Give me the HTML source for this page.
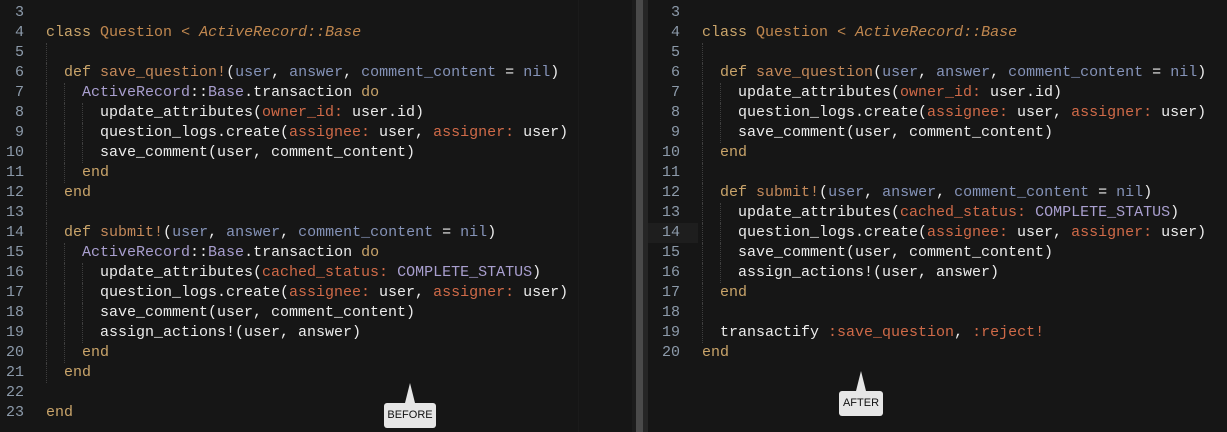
<!DOCTYPE html><html><head><style>
body{margin:0;width:1227px;height:432px;background:#161616;overflow:hidden;position:relative;font-family:"Liberation Mono",monospace;font-size:15px}
.pn{position:absolute;top:3px;line-height:20px;white-space:pre;color:#ececec}
.ln{position:absolute;top:3px;line-height:20px;color:#8c9aaa;text-align:right;white-space:pre}
.g{display:inline-block;width:18px;height:20px;vertical-align:top;box-sizing:border-box;border-left:1px dotted #3e3e3e}
.k{color:#c9a46a}.c{color:#c0874f}.i{font-style:italic;color:#c0874f}.m{color:#c4895a}.p{color:#8593b8}.s{color:#cf6a48}.a{color:#a99fcf}
.tip{position:absolute;background:#e6e6e6;color:#111;font:11px "Liberation Sans",sans-serif;border-radius:3px;text-align:center;line-height:25px}
.tri{position:absolute;width:0;height:0;border-left:5px solid transparent;border-right:5px solid transparent;border-bottom:20px solid #e6e6e6}
</style></head><body>
<div style="position:absolute;left:578px;top:0;width:1px;height:432px;background:#1b1b1b"></div>
<div style="position:absolute;left:632px;top:0;width:4px;height:432px;background:#1c1c1c"></div>
<div style="position:absolute;left:636px;top:0;width:7px;height:432px;background:#4a4a4a"></div>
<div style="position:absolute;left:643px;top:0;width:5px;height:432px;background:#262626"></div>
<div style="position:absolute;left:648px;top:223px;width:50px;height:20px;background:#1e1e1e"></div>
<div class="ln" style="left:0;width:24px">3
4
5
6
7
8
9
10
11
12
13
14
15
16
17
18
19
20
21
22
23</div>
<div class="pn" style="left:46px">
<span class="k">class</span> <span class="c">Question</span> <span class="i">&lt; ActiveRecord::Base</span>
<i class="g"></i>
<i class="g"></i><span class="k">def</span> <span class="m">save_question!</span>(<span class="p">user</span>, <span class="p">answer</span>, <span class="p">comment_content</span> = <span class="p">nil</span>)
<i class="g"></i><i class="g"></i><span class="a">ActiveRecord</span>::<span class="a">Base</span>.transaction <span class="k">do</span>
<i class="g"></i><i class="g"></i><i class="g"></i>update_attributes(<span class="s">owner_id:</span> user.id)
<i class="g"></i><i class="g"></i><i class="g"></i>question_logs.create(<span class="s">assignee:</span> user, <span class="s">assigner:</span> user)
<i class="g"></i><i class="g"></i><i class="g"></i>save_comment(user, comment_content)
<i class="g"></i><i class="g"></i><span class="k">end</span>
<i class="g"></i><span class="k">end</span>
<i class="g"></i>
<i class="g"></i><span class="k">def</span> <span class="m">submit!</span>(<span class="p">user</span>, <span class="p">answer</span>, <span class="p">comment_content</span> = <span class="p">nil</span>)
<i class="g"></i><i class="g"></i><span class="a">ActiveRecord</span>::<span class="a">Base</span>.transaction <span class="k">do</span>
<i class="g"></i><i class="g"></i><i class="g"></i>update_attributes(<span class="s">cached_status:</span> <span class="a">COMPLETE_STATUS</span>)
<i class="g"></i><i class="g"></i><i class="g"></i>question_logs.create(<span class="s">assignee:</span> user, <span class="s">assigner:</span> user)
<i class="g"></i><i class="g"></i><i class="g"></i>save_comment(user, comment_content)
<i class="g"></i><i class="g"></i><i class="g"></i>assign_actions!(user, answer)
<i class="g"></i><i class="g"></i><span class="k">end</span>
<i class="g"></i><span class="k">end</span>

<span class="k">end</span></div>
<div class="ln" style="left:650px;width:30px">3
4
5
6
7
8
9
10
11
12
13
14
15
16
17
18
19
20</div>
<div class="pn" style="left:702px">
<span class="k">class</span> <span class="c">Question</span> <span class="i">&lt; ActiveRecord::Base</span>
<i class="g"></i>
<i class="g"></i><span class="k">def</span> <span class="m">save_question</span>(<span class="p">user</span>, <span class="p">answer</span>, <span class="p">comment_content</span> = <span class="p">nil</span>)
<i class="g"></i><i class="g"></i>update_attributes(<span class="s">owner_id:</span> user.id)
<i class="g"></i><i class="g"></i>question_logs.create(<span class="s">assignee:</span> user, <span class="s">assigner:</span> user)
<i class="g"></i><i class="g"></i>save_comment(user, comment_content)
<i class="g"></i><span class="k">end</span>
<i class="g"></i>
<i class="g"></i><span class="k">def</span> <span class="m">submit!</span>(<span class="p">user</span>, <span class="p">answer</span>, <span class="p">comment_content</span> = <span class="p">nil</span>)
<i class="g"></i><i class="g"></i>update_attributes(<span class="s">cached_status:</span> <span class="a">COMPLETE_STATUS</span>)
<i class="g"></i><i class="g"></i>question_logs.create(<span class="s">assignee:</span> user, <span class="s">assigner:</span> user)
<i class="g"></i><i class="g"></i>save_comment(user, comment_content)
<i class="g"></i><i class="g"></i>assign_actions!(user, answer)
<i class="g"></i><span class="k">end</span>
<i class="g"></i>
<i class="g"></i>transactify <span class="s">:save_question</span>, <span class="s">:reject!</span>
<span class="k">end</span></div>
<div class="tri" style="left:405px;top:383px"></div>
<div class="tip" style="left:384px;top:403px;width:52px;height:25px">BEFORE</div>
<div class="tri" style="left:856px;top:371px"></div>
<div class="tip" style="left:839px;top:391px;width:44px;height:25px">AFTER</div>
</body></html>
